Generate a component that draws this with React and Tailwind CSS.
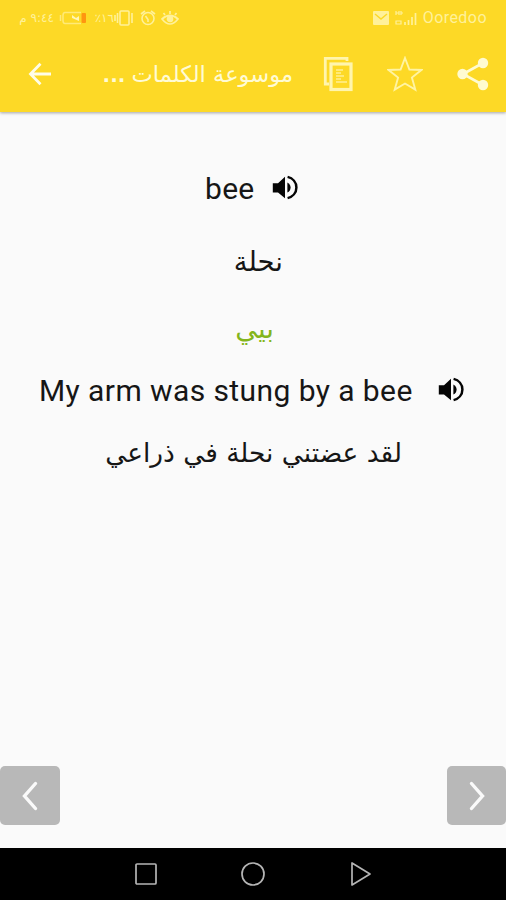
import React from "react";

const Speaker = () => (
  <svg className="h-[26px] w-[27px] shrink-0" viewBox="0 0 27 26" fill="#050505">
    <path d="M0.800 8.200h5.200L13 1.800v21.400l-7-5.800H0.800z" />
    <path d="M15.400 7.400c2.100 1 3.200 3 3.200 5.100s-1.100 4.100-3.200 5.100z" />
    <path d="M15.600 1.900C20.800 3.200 24.400 7.300 24.400 12.500s-3.600 9.300-8.800 10.600" fill="none" stroke="#050505" strokeWidth="2.500" />
  </svg>
);

const StatusBar = () => (
  <div className="flex h-9 items-center justify-between pl-[18px] pr-[19px] text-[#fff19a]">
    <div className="flex items-center">
      <span dir="rtl" className="w-[36px] whitespace-nowrap text-[12px] leading-none">٩:٤٤ م</span>
      {/* battery */}
      <svg className="ml-[5px] h-[16px] w-[29px]" viewBox="0 0 29 16" fill="none">
        <path d="M1.500 5v6M6 2.500h16M6 13.500h16M6 2.500q-2 0-2 3v5q0 3 2 3" stroke="#ffea78" strokeWidth="1.500" />
        <path d="M13 5l4 3 3-2v5l-7-3z" fill="#fff6b5" />
        <rect x="22.500" y="3" width="4.500" height="10" rx="1" fill="#ff9510" />
      </svg>
      <span dir="rtl" className="ml-1 w-[22px] whitespace-nowrap text-[12px] leading-none">١٦٪</span>
      {/* vibrate */}
      <svg className="h-[18px] w-[21px]" viewBox="0 0 21 18" fill="none" stroke="#fff19a" strokeWidth="1.600">
        <rect x="6" y="2" width="9" height="14" rx="1" />
        <path d="M3.500 4v10M18 4v10M1 6v6" />
      </svg>
      {/* alarm */}
      <svg className="ml-1 h-[18px] w-[18px]" viewBox="0 0 18 18" fill="none" stroke="#fff19a" strokeWidth="1.600">
        <circle cx="9" cy="9.500" r="6" />
        <path d="M2 5l4-3M16 5l-4-3M6.500 7L9 10.500V13" />
      </svg>
      {/* eye comfort */}
      <svg className="ml-1 h-[18px] w-[18px]" viewBox="0 0 18 18" fill="none" stroke="#fff19a" strokeWidth="1.700">
        <path d="M1 10q8-7 16 0-8 10-16 0zM9 5V2M4 6L2.500 4M14 6l1.500-2" />
        <circle cx="9" cy="10" r="2.500" fill="#fff19a" />
      </svg>
    </div>
    <div className="flex items-center">
      <svg className="h-[14px] w-[16px]" viewBox="0 0 16 14" fill="none">
        <rect width="16" height="14" rx="1" fill="#fff19a" />
        <path d="M2 3l6 5 6-5" stroke="#fcd928" strokeWidth="1.500" />
      </svg>
      <svg className="ml-[5px] h-[18px] w-[25px]" viewBox="0 0 25 18" fill="none" stroke="#fff19a">
        <path d="M2 2v4M5 2v4M2 4h3M7 2v4M7 4h2M2 12v3h5v-3z" strokeWidth="1.200" />
        <path d="M11 13v3M14.500 11v5M18 8v8M21.500 4v12" strokeWidth="1.700" />
      </svg>
      <span className="ml-[4px] font-['Roboto',sans-serif] text-[16px] leading-none tracking-[0.45px]">Ooredoo</span>
    </div>
  </div>
);

const Toolbar = () => (
  <div className="flex h-[76px] items-center pl-[28px] pr-[15px] text-[#fffbd5]">
    <svg className="h-6 w-6" viewBox="0 0 24 24" fill="none" stroke="#fffde8" strokeWidth="2.800">
      <path d="M23 12H3M12.500 1.800L2.500 12l10 10.200" />
    </svg>
    <h1 dir="rtl" className="ml-[51px] w-[190px] whitespace-nowrap text-[22.600px] leading-[30px]">
      موسوعة الكلمات <span className="-mr-px text-[20px] font-bold">...</span>
    </h1>
    {/* copy */}
    <svg className="ml-[30px] h-9 w-[30px]" viewBox="0 0 30 36" fill="none">
      <path d="M6 28H2.300V2.300H24V5" stroke="#fff5ad" strokeWidth="2.800" />
      <rect x="8" y="8" width="20" height="25.500" stroke="#fff5ad" strokeWidth="3.200" />
      <path d="M13 14h7M13 17h5M13 20h8M13 23h5M13 26h11" stroke="#ffef91" strokeWidth="1.300" />
    </svg>
    {/* favourite */}
    <svg className="ml-[34px] h-9 w-9" viewBox="0 0 36 36" fill="none" stroke="#fff4a3" strokeWidth="1.900">
      <path d="M18 2l4.400 11.500 12 .5-9.500 7.600 3.400 12L18 27.500 7.700 33.600l3.400-12L1.600 14l12-.5z" />
    </svg>
    {/* share */}
    <svg className="ml-[34px] h-9 w-8" viewBox="0 0 32 36" fill="#fffbd0">
      <path d="M26 7L6 18l20 11" fill="none" stroke="#fffbd0" strokeWidth="2.600" />
      <circle cx="26" cy="7" r="5.200" />
      <circle cx="5.500" cy="18" r="5.200" />
      <circle cx="26" cy="29" r="5.200" />
    </svg>
  </div>
);

const App = () => {
  return (
    <div className="flex h-[900px] w-[506px] flex-col overflow-hidden bg-[#fafafa] font-['DejaVu_Sans',sans-serif]">
      <header className="h-[112px] shrink-0 bg-[#fdd926] shadow-[0_1px_3px_rgba(0,0,0,0.35)]">
        <StatusBar />
        <Toolbar />
      </header>

      <main className="flex flex-1 flex-col text-[#161616]">
        <div className="mt-[56px] flex h-10 items-center pl-[205px]">
          <span className="w-[67px] pt-0.5 font-['Roboto',sans-serif] text-[30px] leading-10 tracking-[0.3px]">bee</span>
          <Speaker />
        </div>
        <p dir="rtl" className="mt-[33px] pr-[223px] text-[27.500px] leading-10">نحلة</p>
        <p dir="rtl" className="mt-[27px] pr-[232px] text-[27.500px] leading-10 text-[#84b51c]">بيي</p>
        <div className="mt-[22px] flex h-10 items-center pl-[39px]">
          <span className="w-[399px] whitespace-nowrap pt-0.5 font-['Roboto',sans-serif] text-[30px] leading-10 tracking-[0.42px]">
            My arm was stung by a bee
          </span>
          <Speaker />
        </div>
        <p dir="rtl" className="mt-[23px] pr-[104px] text-[26.400px] leading-10">لقد عضتني نحلة في ذراعي</p>

        {/* previous / next word */}
        <div className="mt-auto mb-[23px] flex justify-between">
          <button className="flex h-[59px] w-[60px] items-center justify-center rounded-[5px] bg-[#b8b8b8]">
            <svg className="h-[30px] w-5" viewBox="0 0 20 30" fill="none" stroke="#fafafa" strokeWidth="3.400" strokeLinecap="round">
              <path d="M15.500 2.500L4.500 15l11 12.500" />
            </svg>
          </button>
          <button className="flex h-[59px] w-[59px] items-center justify-center rounded-[5px] bg-[#b8b8b8]">
            <svg className="h-[30px] w-5" viewBox="0 0 20 30" fill="none" stroke="#fafafa" strokeWidth="3.400" strokeLinecap="round">
              <path d="M4.500 2.500l11 12.500-11 12.500" />
            </svg>
          </button>
        </div>
      </main>

      <nav className="flex h-[52px] shrink-0 items-center bg-black pl-[135px]">
        <svg className="h-[22px] w-[22px]" viewBox="0 0 22 22" fill="none" stroke="#b5b5b5" strokeWidth="1.700">
          <rect x="1" y="1" width="20" height="20" rx="1" />
        </svg>
        <svg className="ml-[84px] h-6 w-6" viewBox="0 0 24 24" fill="none" stroke="#b5b5b5" strokeWidth="1.700">
          <circle cx="12" cy="12" r="11" />
        </svg>
        <svg className="ml-[85px] h-[26px] w-[22px]" viewBox="0 0 22 26" fill="none" stroke="#b5b5b5" strokeWidth="1.700" strokeLinejoin="round">
          <path d="M2 2v22l18-11z" />
        </svg>
      </nav>
    </div>
  );
};

export default App;
